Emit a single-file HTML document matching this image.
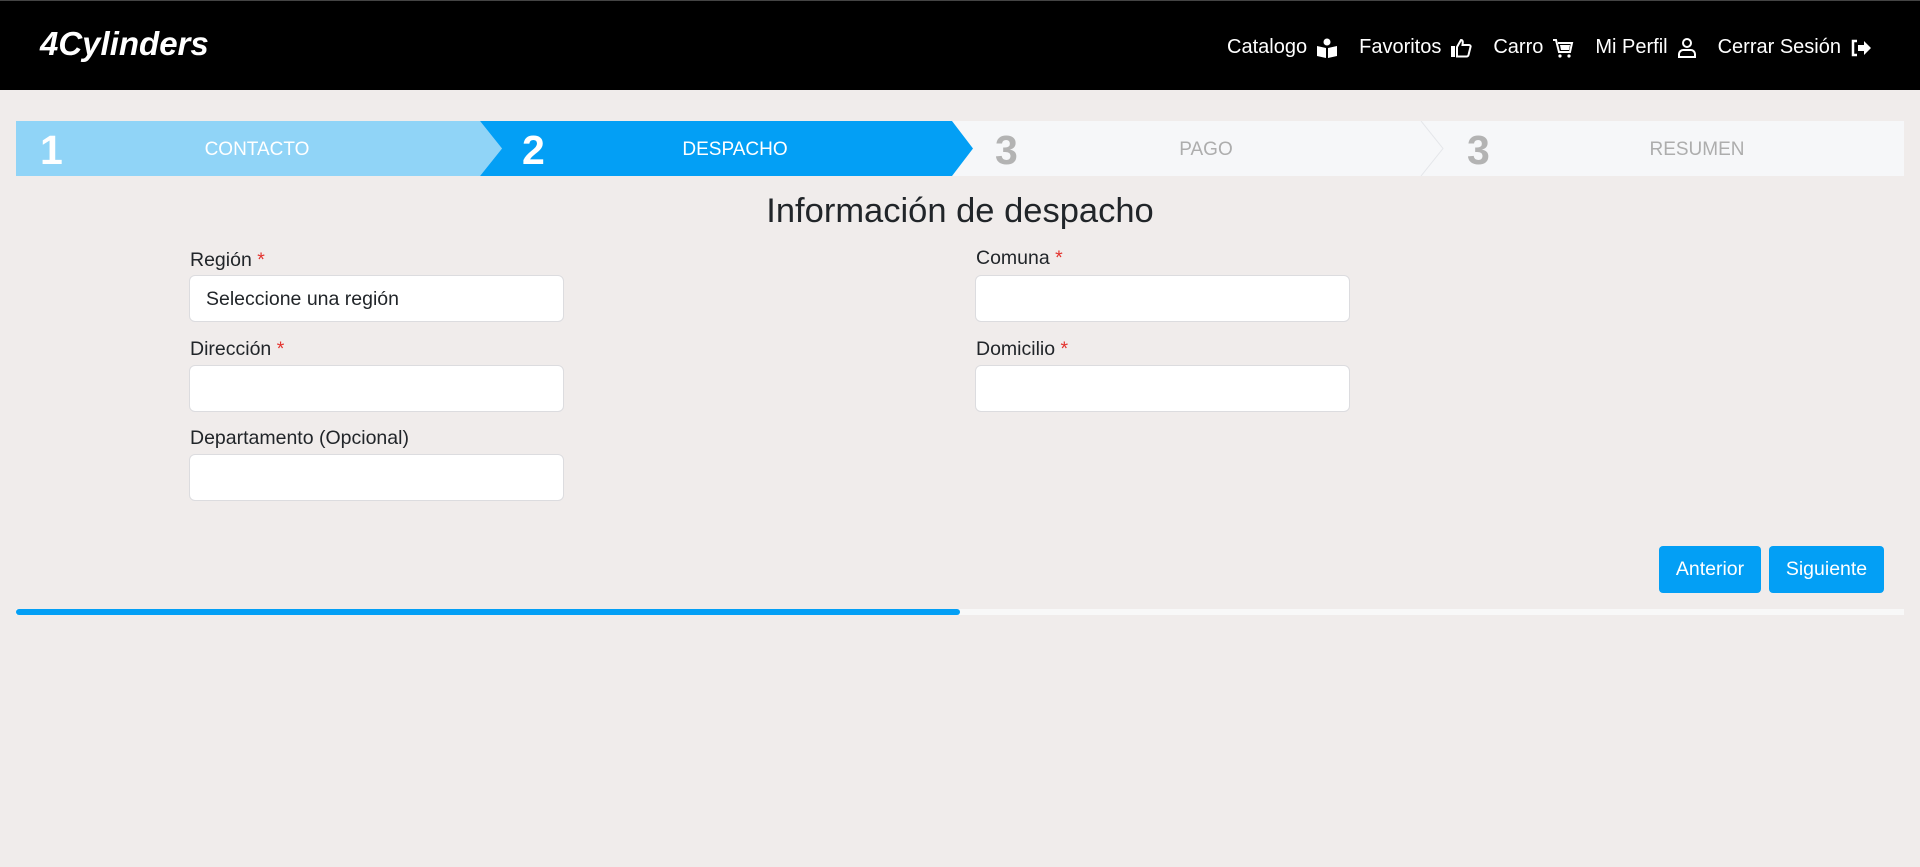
<!DOCTYPE html>
<html><head><meta charset="utf-8"><style>
*{box-sizing:border-box;margin:0;padding:0}
body{width:1920px;height:867px;background:#f0eceb;font-family:"Liberation Sans",Arial,sans-serif;position:relative;overflow:hidden;color:#212529}
.nav{position:absolute;left:0;top:0;width:1920px;height:90px;background:#000;border-top:1px solid #444}
.logo{position:absolute;left:40px;top:24px;color:#fff;font-weight:bold;font-style:italic;font-size:33px}
.links{position:absolute;right:48px;top:35px;color:#fff;font-size:20px;display:flex;gap:21px;align-items:center}
.links span{display:flex;align-items:center;gap:9px}
.steps{position:absolute;left:16px;top:121px;width:1888px;height:55px;background:#f6f7f9}
.num{position:absolute;top:6px;font-size:41px;font-weight:bold;font-family:"Liberation Sans",Arial,sans-serif}
.lbl{position:absolute;top:18px;font-size:19px;transform:translateX(-50%)}
.title{position:absolute;left:0;width:1920px;top:192px;text-align:center;font-size:34.5px}
.fl{position:absolute;font-size:19.5px}
.fl b{color:#e3342f;font-weight:normal}
.in{position:absolute;width:375px;height:47px;background:#fff;border:1px solid #dcdcdf;border-radius:6px;font-size:19.5px;padding:12px 16px}
.btn{position:absolute;top:546px;height:47px;background:#039ff5;color:#fff;font-size:19.5px;border-radius:4px;text-align:center;line-height:47px}
</style></head><body>
<div class="nav">
<div class="logo">4Cylinders</div>
<div class="links">
<span>Catalogo <svg width="22" height="20" viewBox="0 0 22 20"><circle cx="11" cy="4" r="3.5" fill="#fff"/><path d="M1 8l9 2v10L1 18z M21 8l-9 2v10l9-2z" fill="#fff"/></svg></span>
<span>Favoritos <svg width="22" height="20" viewBox="0 0 22 20"><rect x="1" y="8" width="4" height="11" fill="#fff"/><path d="M7 9l4-7c2 0 2 2 1.5 5H19c1 0 2 1 1.5 2l-2 8c-.3 1-1 1.5-2 1.5H7z" fill="none" stroke="#fff" stroke-width="2"/></svg></span>
<span>Carro <svg width="22" height="20" viewBox="0 0 22 20"><path d="M1 2h3l3 12h11l2-9H6" fill="none" stroke="#fff" stroke-width="2"/><path d="M8 7h10l-1 5H9z" fill="#fff"/><circle cx="8" cy="18" r="1.6" fill="#fff"/><circle cx="17" cy="18" r="1.6" fill="#fff"/></svg></span>
<span>Mi Perfil <svg width="20" height="21" viewBox="0 0 20 21"><circle cx="10" cy="6" r="4" fill="none" stroke="#fff" stroke-width="2"/><path d="M2 20v-3c0-2 2-4 4-4h8c2 0 4 2 4 4v3z" fill="none" stroke="#fff" stroke-width="2"/></svg></span>
<span>Cerrar Sesión <svg width="22" height="20" viewBox="0 0 22 20"><path d="M7 3H3v14h4" fill="none" stroke="#fff" stroke-width="2.5"/><path d="M8 7h6V3l7 7-7 7v-4H8z" fill="#fff"/></svg></span>
</div></div>

<div class="steps">
<svg width="1888" height="55" style="position:absolute;left:0;top:0">
<polygon points="0,0 464,0 486,27.5 464,55 0,55" fill="#90d4f7"/>
<polygon points="464,0 936,0 957,27.5 936,55 464,55 486,27.5" fill="#039ff5"/>
<polyline points="1405,0 1427,27.5 1405,55" fill="none" stroke="#e4e6ea" stroke-width="1"/>
</svg>
<div class="num" style="left:24px;color:#fff">1</div>
<div class="lbl" style="left:241px;color:#fff">CONTACTO</div>
<div class="num" style="left:506px;color:#fff">2</div>
<div class="lbl" style="left:719px;color:#fff">DESPACHO</div>
<div class="num" style="left:979px;color:#b3b3b3">3</div>
<div class="lbl" style="left:1190px;color:#adadad">PAGO</div>
<div class="num" style="left:1451px;color:#b3b3b3">3</div>
<div class="lbl" style="left:1681px;color:#adadad">RESUMEN</div>
</div>

<div class="title">Información de despacho</div>

<div class="fl" style="left:190px;top:249px">Región <b>*</b></div>
<div class="in" style="left:189px;top:275px">Seleccione una región</div>
<div class="fl" style="left:976px;top:247px">Comuna <b>*</b></div>
<div class="in" style="left:975px;top:275px"></div>

<div class="fl" style="left:190px;top:338px">Dirección <b>*</b></div>
<div class="in" style="left:189px;top:365px"></div>
<div class="fl" style="left:976px;top:338px">Domicilio <b>*</b></div>
<div class="in" style="left:975px;top:365px"></div>

<div class="fl" style="left:190px;top:427px">Departamento (Opcional)</div>
<div class="in" style="left:189px;top:454px"></div>

<div class="btn" style="left:1659px;width:102px">Anterior</div>
<div class="btn" style="left:1769px;width:115px">Siguiente</div>

<div style="position:absolute;left:16px;top:609px;width:1888px;height:6px;background:#f8f8f8"></div>
<div style="position:absolute;left:16px;top:609px;width:944px;height:6px;background:#039ff5;border-radius:3px"></div>
</body></html>
